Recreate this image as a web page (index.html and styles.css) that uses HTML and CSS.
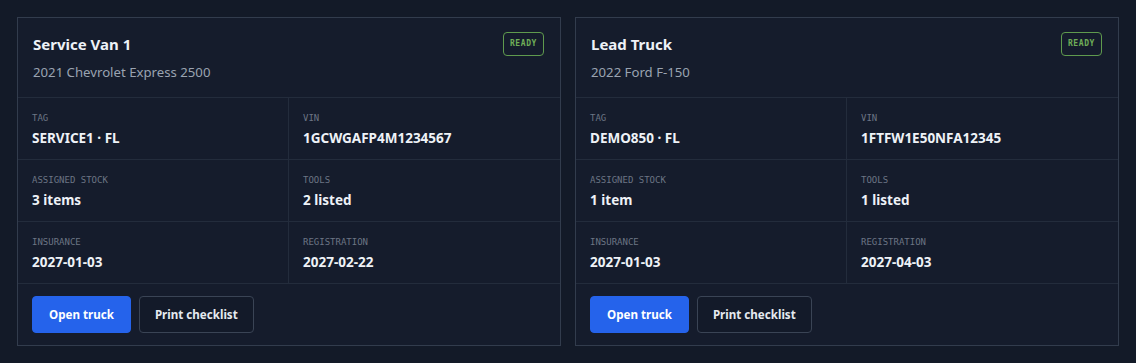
FILE: index.html
```html
<!DOCTYPE html>
<html lang="en">

<head>
  <meta charset="UTF-8">
  <meta name="viewport" content="width=device-width, initial-scale=1.0">
  <title>Trucks</title>
  <link rel="stylesheet" href="styles.css">
</head>

<body>
  <div class="trucks">
    <div class="truck">
      <div class="truck-head">
        <div>
          <div class="truck-name">Service Van 1</div>
          <div class="truck-model">2021 Chevrolet Express 2500</div>
        </div>
        <span class="badge">READY</span>
      </div>
      <div class="facts">
        <div class="fact">
          <div class="label">TAG</div>
          <div class="value">SERVICE1 · FL</div>
        </div>
        <div class="fact">
          <div class="label">VIN</div>
          <div class="value">1GCWGAFP4M1234567</div>
        </div>
        <div class="fact">
          <div class="label">ASSIGNED STOCK</div>
          <div class="value">3 items</div>
        </div>
        <div class="fact">
          <div class="label">TOOLS</div>
          <div class="value">2 listed</div>
        </div>
        <div class="fact">
          <div class="label">INSURANCE</div>
          <div class="value">2027-01-03</div>
        </div>
        <div class="fact">
          <div class="label">REGISTRATION</div>
          <div class="value">2027-02-22</div>
        </div>
      </div>
      <div class="actions">
        <button class="btn primary">Open truck</button>
        <button class="btn">Print checklist</button>
      </div>
    </div>

    <div class="truck">
      <div class="truck-head">
        <div>
          <div class="truck-name">Lead Truck</div>
          <div class="truck-model">2022 Ford F-150</div>
        </div>
        <span class="badge">READY</span>
      </div>
      <div class="facts">
        <div class="fact">
          <div class="label">TAG</div>
          <div class="value">DEMO850 · FL</div>
        </div>
        <div class="fact">
          <div class="label">VIN</div>
          <div class="value">1FTFW1E50NFA12345</div>
        </div>
        <div class="fact">
          <div class="label">ASSIGNED STOCK</div>
          <div class="value">1 item</div>
        </div>
        <div class="fact">
          <div class="label">TOOLS</div>
          <div class="value">1 listed</div>
        </div>
        <div class="fact">
          <div class="label">INSURANCE</div>
          <div class="value">2027-01-03</div>
        </div>
        <div class="fact">
          <div class="label">REGISTRATION</div>
          <div class="value">2027-04-03</div>
        </div>
      </div>
      <div class="actions">
        <button class="btn primary">Open truck</button>
        <button class="btn">Print checklist</button>
      </div>
    </div>
  </div>
</body>

</html>
```

FILE: styles.css
```css
body {
  margin: 0;
  background-color: #131a28;
  font-family: "Noto Sans", "Open Sans", sans-serif;
  color: #eef2f7;
}

.trucks {
  display: grid;
  grid-template-columns: 1fr 1fr;
  gap: 14px;
  padding: 17px;
}

.truck {
  background-color: #151c2c;
  border: 1px solid #323c4d;
}

.truck-head {
  display: flex;
  justify-content: space-between;
  align-items: flex-start;
  padding: 15px 16px 0 15px;
  height: 64px;
  border-bottom: 1px solid #232c3c;
}

.truck-name {
  font-size: 15px;
  font-weight: 700;
  line-height: 22px;
}

.truck-model {
  margin-top: 8px;
  font-size: 13.2px;
  line-height: 18px;
  color: #9aa3b1;
}

.badge {
  margin-top: -1px;
  padding: 0 6px;
  height: 22px;
  line-height: 22px;
  border: 1px solid #5f9a4e;
  border-radius: 4px;
  color: #6fae58;
  font-family: "DejaVu Sans Mono", monospace;
  font-size: 8px;
  font-weight: 700;
  letter-spacing: 0.6px;
}

.facts {
  display: grid;
  grid-template-columns: 1fr 1fr;
}

.fact {
  height: 61px;
  padding: 0 14px;
  border-bottom: 1px solid #232c3c;
}

.fact:nth-child(odd) {
  border-right: 1px solid #232c3c;
}

.label {
  margin-top: 14px;
  font-family: "DejaVu Sans Mono", monospace;
  font-size: 9px;
  line-height: 12px;
  color: #6c7584;
}

.value {
  margin-top: 4px;
  font-size: 13.5px;
  font-weight: 700;
  line-height: 20px;
}

.actions {
  display: flex;
  gap: 8px;
  padding: 12px 14px;
}

.btn {
  height: 37px;
  padding: 0 15px;
  font-family: inherit;
  font-size: 11.6px;
  font-weight: 700;
  color: #e6eaf0;
  background-color: #131a29;
  border: 1px solid #3a4455;
  border-radius: 4px;
  cursor: pointer;
}

.btn.primary {
  padding: 0 16px;
  background-color: #2563eb;
  border-color: #2563eb;
  color: white;
}
```
